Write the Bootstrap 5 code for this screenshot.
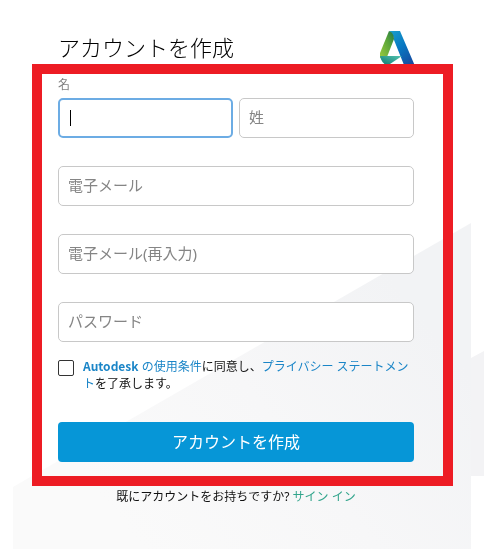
<!DOCTYPE html>
<html lang="ja">
<head>
<meta charset="utf-8">
<meta name="viewport" content="width=device-width, initial-scale=1">
<title>アカウントを作成</title>
<link href="https://cdn.jsdelivr.net/npm/bootstrap@5.3.0/dist/css/bootstrap.min.css" rel="stylesheet">
<style>
body{font-family:"Noto Sans","Noto Sans CJK JP",sans-serif;font-size:12px;line-height:17px;color:#111;background:#fff}
.backdrop{z-index:-1}
.signup-panel{margin:0 13px;padding-top:30px}
.signup-head{height:34px;padding:0 56px 0 45px}
.signup-head h1{font-size:22px;line-height:32px;font-weight:300;color:#000;font-family:"Noto Sans CJK JP",sans-serif}
.brand-mark{width:35px;height:40px}
.marked-area{margin:0 18px 0 19px;border:10px solid #ed1c24;padding:2px 29px 14px 16px}
.field-label{color:#808080;line-height:17px;margin-bottom:5px}
.fields{gap:28px}
.name-row{gap:6px}
.name-row .field{flex:1 1 0;min-width:0}
.form-control.field{height:40px;padding:0 9px 2px;border:1px solid #c8c8c8;border-radius:5px;font-size:15px;box-shadow:none}
.form-control.field::placeholder{color:#858585;opacity:1}
.form-control.field.current{padding:0 8px;border:2px solid #6cace4;caret-color:transparent;background:linear-gradient(#000,#000) 10px center/1px 16px no-repeat #fff}
.terms{margin-top:16px;gap:9px}
.terms .form-check-input{width:16px;height:16px;margin:2px 0 0;border:1px solid #333;border-radius:2px}
.terms .product{font-family:"Noto Sans CJK JP",sans-serif;font-weight:700;line-height:1}
a{color:#1a85c7}
a.signin{color:#32a58c}
.btn.submit{height:40px;margin-top:30px;padding:0;background:#0696d7;border:0;border-radius:4px;color:#fff;font-size:16px}
.signin-line{padding:2px 57px 0 45px}
</style>
</head>
<body>
<div class="backdrop position-fixed top-0 start-0 w-100 h-100" aria-hidden="true">
<svg width="100%" height="100%" viewBox="0 0 484 549" preserveAspectRatio="none">
<defs><linearGradient id="haze" gradientUnits="userSpaceOnUse" x1="120" y1="520" x2="400" y2="290"><stop offset="0" stop-color="#fafafa"/><stop offset=".5" stop-color="#f7f7f8"/><stop offset="1" stop-color="#f2f3f5"/></linearGradient></defs>
<path fill="url(#haze)" d="M13 487 471 223V549H13z"/>
<path fill="#f3f3f5" d="M471 358 484 351V476H471z"/>
</svg>
</div>
<main class="signup-panel">
<header class="signup-head d-flex justify-content-between align-items-start">
<h1 class="m-0">アカウントを作成</h1>
<svg class="brand-mark flex-shrink-0" viewBox="0 0 35 40" role="img" aria-label="Autodesk">
<defs>
<linearGradient id="green" x1="1" y1="0" x2="0" y2="1"><stop offset="0" stop-color="#217347"/><stop offset=".4" stop-color="#58a43a"/><stop offset="1" stop-color="#9bca3e"/></linearGradient>
<linearGradient id="blue" x1="0" y1="0" x2=".6" y2="1"><stop offset="0" stop-color="#1ba0cc"/><stop offset=".5" stop-color="#0878c2"/><stop offset="1" stop-color="#174ba0"/></linearGradient>
<linearGradient id="teal" x1="0" y1="1" x2="1" y2="0"><stop offset="0" stop-color="#08756c"/><stop offset="1" stop-color="#55c5b2"/></linearGradient>
</defs>
<path fill="url(#blue)" d="M9 1H20L35 36V40H26L14 10Q13 3 9 1z"/>
<path fill="url(#green)" d="M9 1Q14 3 14 9L7 27 0 28V23z"/>
<path fill="url(#teal)" d="M0 26H22L7 36Q1 32 0 26z"/>
</svg>
</header>
<form class="marked-area position-relative">
<label class="field-label d-block" for="given">名</label>
<div class="fields d-flex flex-column">
<div class="name-row d-flex">
<input class="form-control field current" id="given" type="text">
<input class="form-control field" type="text" placeholder="姓" aria-label="姓">
</div>
<input class="form-control field" type="email" placeholder="電子メール" aria-label="電子メール">
<input class="form-control field" type="email" placeholder="電子メール(再入力)" aria-label="電子メール(再入力)">
<input class="form-control field" type="password" placeholder="パスワード" aria-label="パスワード">
</div>
<div class="terms d-flex align-items-start">
<input class="form-check-input flex-shrink-0" type="checkbox" id="agree">
<label for="agree"><a class="text-decoration-none" href="#"><span class="product">Autodesk</span> の使用条件</a>に同意し、<a class="text-decoration-none" href="#">プライバシー ステートメント</a>を了承します。</label>
</div>
<button class="btn submit w-100" type="submit">アカウントを作成</button>
</form>
<p class="signin-line text-center mb-0">既にアカウントをお持ちですか? <a class="signin text-decoration-none" href="#">サイン イン</a></p>
</main>
<script src="https://cdn.jsdelivr.net/npm/bootstrap@5.3.0/dist/js/bootstrap.bundle.min.js"></script>
</body>
</html>
